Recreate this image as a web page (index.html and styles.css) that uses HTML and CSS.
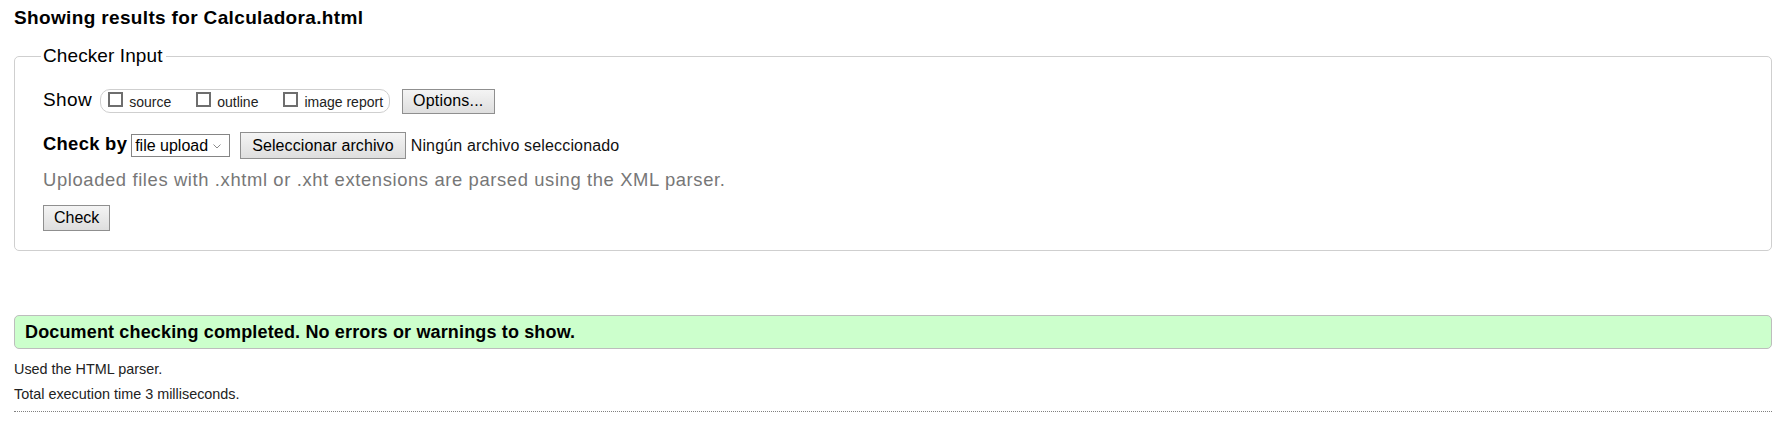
FILE: index.html
```html
<!DOCTYPE html>
<html lang="en">
<head>
<meta charset="utf-8">
<title>Showing results for Calculadora.html - Nu Html Checker</title>
<link rel="stylesheet" href="styles.css">
</head>
<body>
<div class="page">
  <h2 class="results-title">Showing results for Calculadora.html</h2>
  <form class="checker-form">
    <fieldset class="checker-input">
      <legend>Checker Input</legend>
      <div class="row show-row">
        <span class="row-label show-label">Show</span>
        <span class="checkboxes">
          <label class="check"><input type="checkbox"><span>source</span></label>
          <label class="check"><input type="checkbox"><span>outline</span></label>
          <label class="check"><input type="checkbox"><span>image report</span></label>
        </span>
        <button type="button" class="btn options-btn">Options...</button>
      </div>
      <div class="row checkby-row">
        <label class="row-label bold" for="docselect">Check by</label>
        <span class="select-wrap">
          <select id="docselect" class="doc-select"><option>file upload</option></select>
          <svg class="chevron" width="8" height="5" viewBox="0 0 8 5" aria-hidden="true"><polyline points="0.5,0.5 4,4 7.5,0.5" fill="none" stroke="#8a8a8a" stroke-width="1"/></svg>
        </span>
        <button type="button" class="btn file-btn">Seleccionar archivo</button>
        <span class="file-status">Ningún archivo seleccionado</span>
      </div>
      <p class="instructions">Uploaded files with .xhtml or .xht extensions are parsed using the XML parser.</p>
      <div class="submit-row"><button type="submit" class="btn check-btn">Check</button></div>
    </fieldset>
  </form>
  <p class="success">Document checking completed. No errors or warnings to show.</p>
  <div class="details">
    <p>Used the HTML parser.</p>
    <p>Total execution time 3 milliseconds.</p>
  </div>
  <hr class="divider">
</div>
</body>
</html>
```

FILE: styles.css
```css
* { box-sizing: border-box; }

html, body {
  margin: 0;
  padding: 0;
  background: #fff;
  color: #000;
  font-family: "Liberation Sans", Arial, Helvetica, sans-serif;
}

.page {
  padding: 0 17px 0 14px;
}

.results-title {
  margin: 7px 0 0;
  font-size: 19px;
  line-height: 22px;
  font-weight: bold;
  letter-spacing: 0.35px;
}

.checker-form {
  margin: 16px 0 0;
}

.checker-input {
  margin: 0;
  min-width: 0;
  padding: 21px 28px 19px;
  border: 1px solid #cfcfcf;
  border-radius: 5px;
}

.checker-input legend {
  margin-left: -2px;
  padding: 0 3px 0 2px;
  font-size: 19px;
  line-height: 22px;
  letter-spacing: 0.1px;
}

.row {
  display: flex;
  align-items: center;
}

.show-row { height: 26px; }

.checkby-row {
  height: 27px;
  margin-top: 18px;
}

.row-label {
  font-size: 18.4px;
  line-height: 20px;
  padding-bottom: 3px;
  letter-spacing: 0.3px;
}

.show-label {
  font-size: 19px;
  letter-spacing: 0.4px;
}

.row-label.bold { font-weight: bold; }

.checkboxes {
  display: inline-flex;
  align-items: center;
  height: 24px;
  margin-left: 8px;
  padding: 0 6px 0 7px;
  border: 1px solid #cfcfcf;
  border-radius: 10px;
}

.check {
  display: inline-flex;
  align-items: baseline;
  font-size: 14px;
  line-height: 16px;
  color: #222;
}

.check + .check { margin-left: 25px; }

.check input {
  appearance: none;
  -webkit-appearance: none;
  flex: none;
  width: 15px;
  height: 15px;
  margin: 0 6px 0 0;
  border: 2px solid #6e6e6e;
  background: #fff;
  border-radius: 0;
}

.btn {
  font-family: inherit;
  font-size: 16px;
  color: #000;
  padding: 0 10px;
  border: 1px solid #8f8f8f;
  border-radius: 0;
  background: linear-gradient(#f4f4f4, #dedede);
}

.options-btn {
  height: 25px;
  margin-left: 12px;
  letter-spacing: 0.2px;
}

.select-wrap {
  position: relative;
  display: inline-flex;
  margin-left: 4px;
}

.doc-select {
  appearance: none;
  -webkit-appearance: none;
  width: 99px;
  height: 23px;
  margin: 0;
  padding: 0 0 0 3px;
  border: 1px solid #858585;
  border-radius: 0;
  background: #fff;
  color: #000;
  font-family: inherit;
  font-size: 16px;
}

.chevron {
  position: absolute;
  right: 9px;
  top: 10px;
  pointer-events: none;
}

.file-btn {
  height: 27px;
  margin-left: 10px;
  padding: 0 11px;
  letter-spacing: 0.1px;
}

.file-status {
  margin-left: 5px;
  font-size: 16px;
  letter-spacing: 0.15px;
  color: #111;
}

.instructions {
  margin: 9px 0 0;
  font-size: 18.4px;
  line-height: 24px;
  color: #777;
  letter-spacing: 0.62px;
}

.submit-row {
  margin-top: 13px;
  display: flex;
}

.check-btn {
  height: 26px;
}

.success {
  margin: 64px 0 0;
  height: 34px;
  padding: 0 10px;
  border: 1px solid #bdbdbd;
  border-radius: 5px;
  background: #ccffcc;
  font-size: 18px;
  line-height: 32px;
  font-weight: bold;
  letter-spacing: 0.15px;
}

.details p {
  margin: 7px 0 0;
  font-size: 14.4px;
  line-height: 18px;
  color: #222;
}

.details p:first-child { margin-top: 11px; }

.divider {
  margin: 8px 0 0;
  height: 0;
  border: 0;
  border-top: 1px dotted #808080;
}
```
